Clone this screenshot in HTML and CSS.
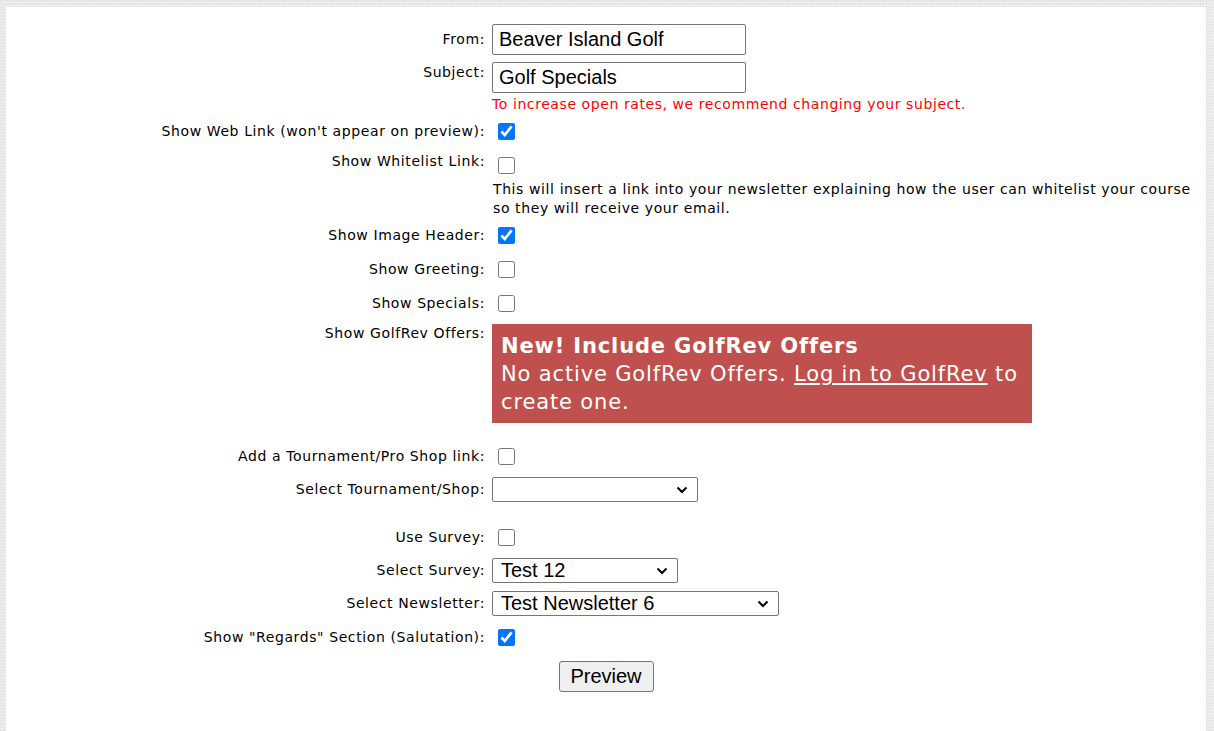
FILE: index.html
```html
<!DOCTYPE html>
<html lang="en">
<head>
  <meta charset="UTF-8">
  <title>Newsletter Settings</title>
  <link rel="stylesheet" href="styles.css">
</head>
<body>
  <div class="panel">
    <form class="settings">
      <div class="row">
        <label class="lbl" for="from">From:</label>
        <div class="val"><input type="text" id="from" class="txt" value="Beaver Island Golf"></div>
      </div>

      <div class="row top subject">
        <label class="lbl" for="subject">Subject:</label>
        <div class="val">
          <input type="text" id="subject" class="txt" value="Golf Specials">
          <div class="warn">To increase open rates, we recommend changing your subject.</div>
        </div>
      </div>

      <div class="row check">
        <label class="lbl">Show Web Link (won't appear on preview):</label>
        <div class="val"><input type="checkbox" checked></div>
      </div>

      <div class="row top whitelist">
        <label class="lbl">Show Whitelist Link:</label>
        <div class="val">
          <input type="checkbox">
          <p class="note">This will insert a link into your newsletter explaining how the user can whitelist your course so they will receive your email.</p>
        </div>
      </div>

      <div class="row check">
        <label class="lbl">Show Image Header:</label>
        <div class="val"><input type="checkbox" checked></div>
      </div>

      <div class="row check">
        <label class="lbl">Show Greeting:</label>
        <div class="val"><input type="checkbox"></div>
      </div>

      <div class="row check">
        <label class="lbl">Show Specials:</label>
        <div class="val"><input type="checkbox"></div>
      </div>

      <div class="row top offers">
        <label class="lbl">Show GolfRev Offers:</label>
        <div class="val">
          <div class="promo">
            <strong>New! Include GolfRev Offers</strong><br>
            No active GolfRev Offers. <a href="#">Log in to GolfRev</a> to create one.
          </div>
        </div>
      </div>

      <div class="row check">
        <label class="lbl">Add a Tournament/Pro Shop link:</label>
        <div class="val"><input type="checkbox"></div>
      </div>

      <div class="row pick">
        <label class="lbl">Select Tournament/Shop:</label>
        <div class="val"><select class="sel shop"><option></option></select></div>
      </div>

      <div class="row check spaced">
        <label class="lbl">Use Survey:</label>
        <div class="val"><input type="checkbox"></div>
      </div>

      <div class="row pick">
        <label class="lbl">Select Survey:</label>
        <div class="val"><select class="sel survey"><option>Test 12</option></select></div>
      </div>

      <div class="row pick">
        <label class="lbl">Select Newsletter:</label>
        <div class="val"><select class="sel newsletter"><option>Test Newsletter 6</option></select></div>
      </div>

      <div class="row check">
        <label class="lbl">Show "Regards" Section (Salutation):</label>
        <div class="val"><input type="checkbox" checked></div>
      </div>

      <div class="actions">
        <button type="button" class="btn">Preview</button>
      </div>
    </form>
  </div>
</body>
</html>
```

FILE: styles.css
```css
body {
  margin: 0;
  background-color: #e9e9e9;
  background-image:
    repeating-linear-gradient(0deg, rgba(255,255,255,0.35) 0 1px, transparent 1px 3px),
    repeating-linear-gradient(90deg, rgba(0,0,0,0.03) 0 1px, transparent 1px 3px);
  font-family: "DejaVu Sans", Verdana, sans-serif;
  font-size: 14px;
  color: #000;
}

.panel {
  margin: 7px 8px 0 6px;
  background: #fff;
  min-height: 740px;
}

.settings {
  padding-top: 17px;
}

.row {
  display: grid;
  grid-template-columns: 479px 1fr;
  column-gap: 7px;
  align-items: center;
}
.row.top {
  align-items: start;
}

.lbl {
  text-align: right;
  line-height: 19px;
  letter-spacing: 0.6px;
}

.txt {
  box-sizing: border-box;
  width: 254px;
  height: 31px;
  margin: 0;
  padding: 0 6px;
  border: 1px solid #767676;
  border-radius: 2px;
  font-family: "Liberation Sans", Arial, sans-serif;
  font-size: 20px;
  color: #000;
}

.subject {
  margin-top: 7px;
}
.subject .lbl {
  padding-top: 1px;
}
.warn {
  color: #ff0000;
  line-height: 19px;
  margin-top: 2px;
  letter-spacing: 0.58px;
}

input[type="checkbox"] {
  width: 17px;
  height: 17px;
  margin: 0 0 0 6px;
  display: block;
}

.check {
  height: 34px;
}

.whitelist {
  height: 70px;
}
.whitelist .lbl {
  padding-top: 4px;
}
.whitelist input[type="checkbox"] {
  margin-top: 9px;
}
.note {
  max-width: 700px;
  margin: 6px 0 0 1px;
  line-height: 19px;
  letter-spacing: 0.6px;
}

.offers .lbl {
  padding-top: 4px;
}
.promo {
  width: 540px;
  box-sizing: border-box;
  margin: 4px 0 16px;
  padding: 8px 9px 7px;
  background: #c0504d;
  color: #fff;
  font-size: 21px;
  line-height: 28px;
  letter-spacing: 0.85px;
}
.promo a {
  color: #fff;
}

.pick {
  height: 33px;
}
.sel {
  appearance: none;
  -webkit-appearance: none;
  box-sizing: border-box;
  height: 25px;
  margin: 0;
  padding: 0 28px 0 8px;
  border: 1px solid #767676;
  border-radius: 2px;
  background: #fff url("data:image/svg+xml,%3Csvg xmlns='http://www.w3.org/2000/svg' width='12' height='8' viewBox='0 0 12 8'%3E%3Cpath d='M1.5 1.5 6 6 10.5 1.5' fill='none' stroke='%23000' stroke-width='2'/%3E%3C/svg%3E") no-repeat right 9px center;
  font-family: "Liberation Sans", Arial, sans-serif;
  font-size: 20px;
  line-height: 23px;
  color: #000;
}
.shop { width: 206px; }
.survey { width: 186px; }
.newsletter { width: 287px; }

.spaced {
  margin-top: 14px;
}

.actions {
  display: flex;
  justify-content: center;
  padding-top: 7px;
}
.btn {
  width: 95px;
  height: 31px;
  background: #efefef;
  border: 1px solid #767676;
  border-radius: 3px;
  font-family: "Liberation Sans", Arial, sans-serif;
  font-size: 20px;
  color: #000;
}
```
